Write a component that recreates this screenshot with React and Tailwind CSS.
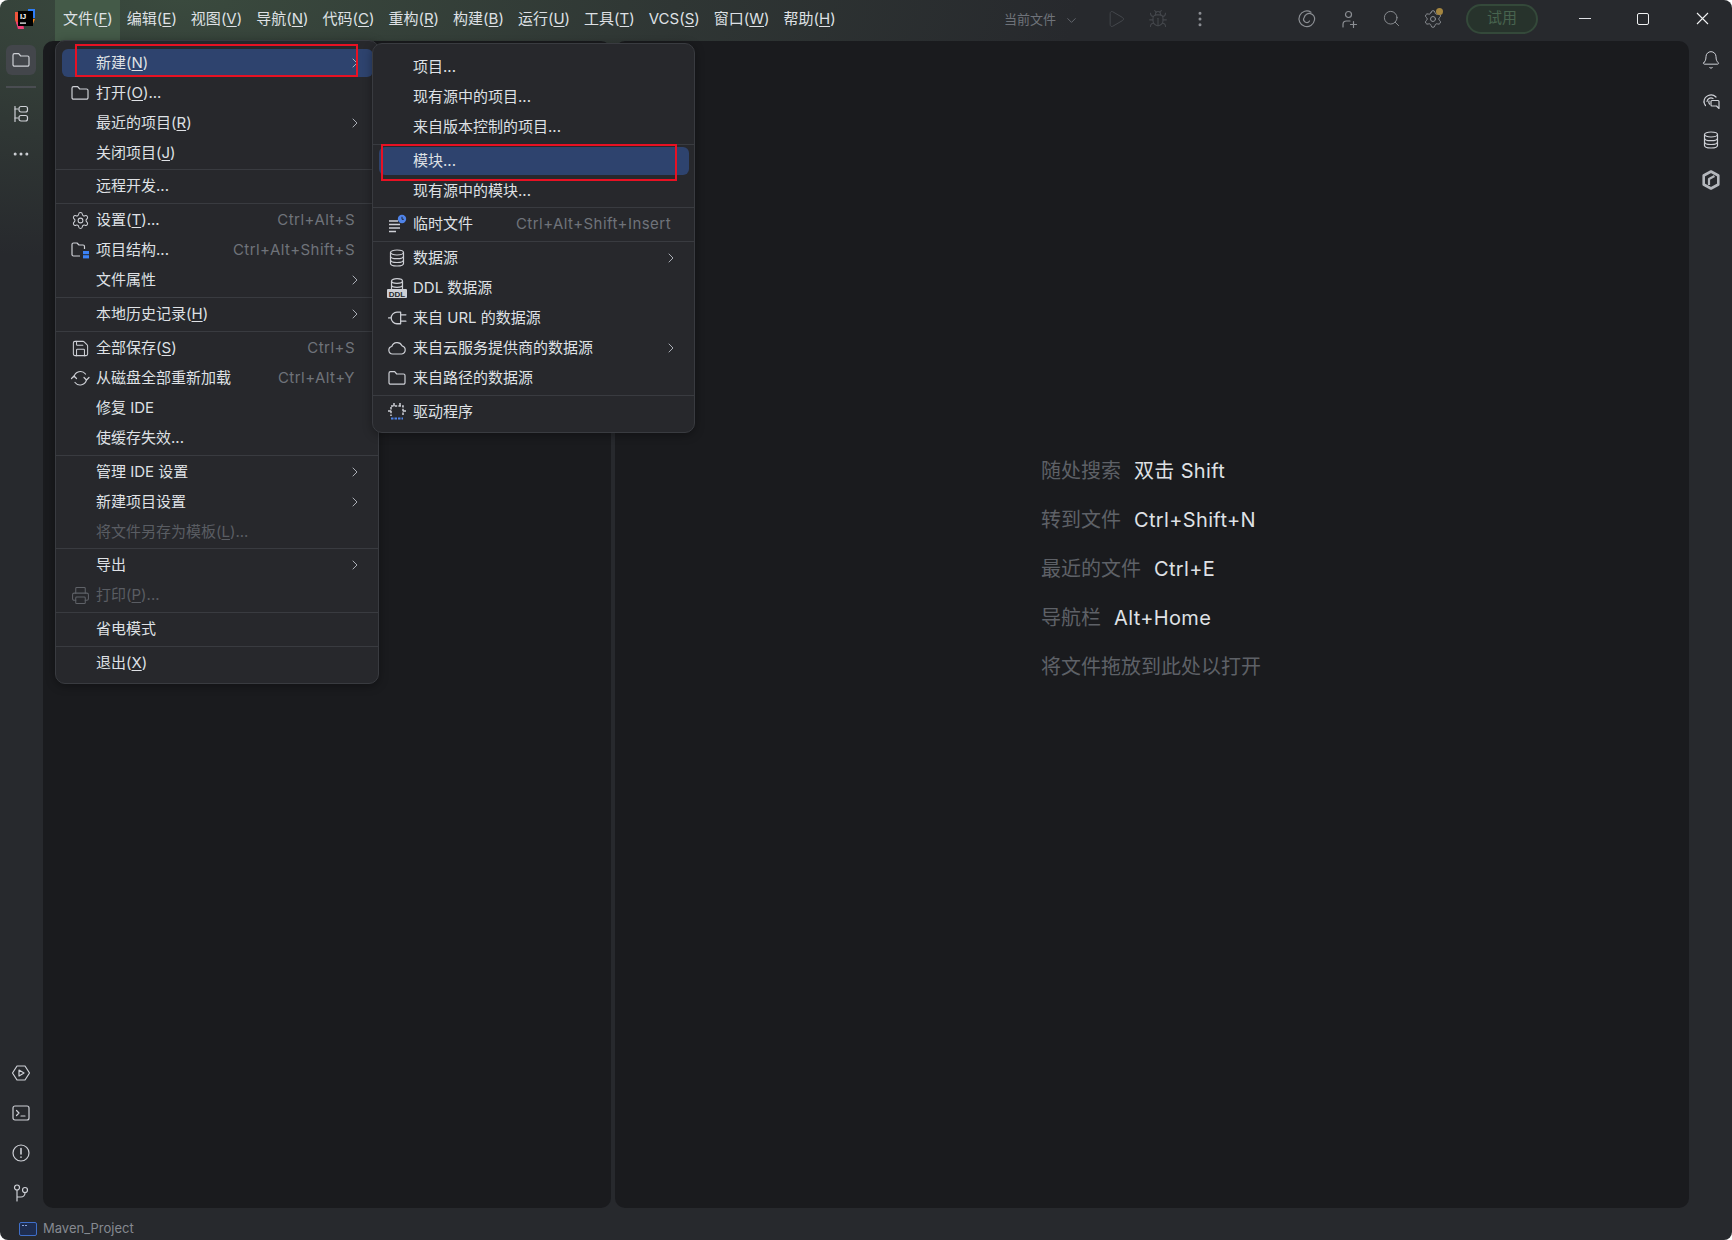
import React from "react";
import { ChevronRight, ChevronDown, Settings, Search, Bug, Play, Bell, Printer, Save, EllipsisVertical, Ellipsis } from "lucide-react";

const FONT = { fontFamily: 'Inter,"Noto Sans CJK SC",sans-serif' };

function Svg({ size = 20, color = "#ced0d6", sw = 1.2, children, view = "0 0 20 20" }) {
  return (
    <svg width={size} height={size} viewBox={view} fill="none" stroke={color} strokeWidth={sw} strokeLinecap="round" strokeLinejoin="round">
      {children}
    </svg>
  );
}

const FolderI = (p) => (
  <Svg {...p}><path d="M2 5.200A1.500 1.500 0 0 1 3.500 3.700h4.200l2 2.300h6.800A1.500 1.500 0 0 1 18 7.500v7.200a1.500 1.500 0 0 1-1.500 1.500h-13A1.500 1.500 0 0 1 2 14.700z" /></Svg>
);
const StructureI = () => (
  <Svg>
    <path d="M4 2.500v15" />
    <path d="M4 5h3M4 14h3" />
    <rect x="8" y="2.500" width="8.500" height="5.500" rx="2" />
    <rect x="8" y="11.500" width="8.500" height="5.500" rx="2" />
  </Svg>
);
const RunHexI = () => (
  <Svg>
    <path d="M6 3h8l4.500 7-4.500 7H6l-4.500-7z" />
    <path d="M8 7l5 3-5 3z" />
  </Svg>
);
const TerminalI = () => (
  <Svg>
    <rect x="2" y="3" width="16" height="14" rx="2" />
    <path d="M5.500 7.500 8 10l-2.500 2.500M10 13h4" />
  </Svg>
);
const AlertI = () => (
  <Svg>
    <circle cx="10" cy="10" r="8" />
    <path d="M10 5.500v5.500M10 14v.300" strokeWidth="1.600" />
  </Svg>
);
const GitI = () => (
  <Svg>
    <circle cx="6" cy="4.500" r="2.500" />
    <circle cx="14" cy="7" r="2.500" />
    <path d="M6 7v11M6 14h4a4 4 0 0 0 4-4v-.500" />
  </Svg>
);
const SpiralI = () => (
  <Svg color="#8c8f94">
    <path d="M14 3.200A7.800 7.800 0 1 0 17.500 11 5.200 5.200 0 0 0 7.200 8.500 3 3 0 0 0 12.500 12" />
  </Svg>
);
const UserI = () => (
  <Svg color="#8c8f94">
    <circle cx="9.500" cy="5.500" r="3" />
    <path d="M4 18v-2.500A3.500 3.500 0 0 1 7.500 12H11M14.500 12.500v6M11.500 15.500h6" />
  </Svg>
);
const AiChatI = () => (
  <Svg>
    <path d="M3 12a7 7 0 0 1 12-5" />
    <path d="M6 11.500a4 4 0 0 1 6-3M4.500 15.500A7 7 0 0 1 3 12M8.500 14a3 3 0 0 1-.500-3" />
    <path d="M11 10.500h6a1 1 0 0 1 1 1v7l-2.500-2.500H11a1 1 0 0 1-1-1v-3.500a1 1 0 0 1 1-1z" />
  </Svg>
);
const DbI = ({ size = 20 }) => (
  <Svg size={size}>
    <ellipse cx="10" cy="4.500" rx="6.500" ry="2.500" />
    <path d="M3.500 4.500v11c0 1.400 2.900 2.500 6.500 2.500s6.500-1.100 6.500-2.500v-11" />
    <path d="M3.500 8.200c0 1.400 2.900 2.500 6.500 2.500s6.500-1.100 6.500-2.500M3.500 12c0 1.400 2.900 2.500 6.500 2.500s6.500-1.100 6.500-2.500" />
  </Svg>
);
const HexI = () => (
  <svg width="20" height="20" viewBox="0 0 20 20" fill="none" stroke="#b4b7bc" strokeLinejoin="round">
    <path d="M10 1.500 17.300 5.500v9L10 18.500 2.700 14.500v-9z" strokeWidth="2.600" />
    <path d="M13.500 6 8 9v6" strokeWidth="2.200" />
  </svg>
);
const StructFolderI = () => (
  <svg width="20" height="20" viewBox="0 0 20 20" fill="none" stroke="#ced0d6" strokeWidth="1.200" strokeLinejoin="round">
    <path d="M10 16H3.500A1.500 1.500 0 0 1 2 14.500v-10A1.500 1.500 0 0 1 3.500 3h3.500l2 2h4A1.500 1.500 0 0 1 14.500 6.500V9" />
    <rect x="13" y="11" width="6" height="3.200" fill="#3b82f6" stroke="none" />
    <rect x="13" y="15.200" width="6" height="3.200" fill="#3b82f6" stroke="none" />
  </svg>
);
const ReloadI = () => (
  <Svg>
    <path d="M4 9a6.500 6.500 0 0 1 11.500-3" />
    <path d="M16.500 11.500A6.500 6.500 0 0 1 5 14.500" />
    <path d="M1.500 10.500 4 8l2.500 2.500" />
    <path d="M14 9.500l2.500 2.500 2.500-2.500" />
  </Svg>
);
const ScratchI = () => (
  <svg width="20" height="20" viewBox="0 0 20 20" fill="none">
    <path d="M2 7h9M2 10.500h11M2 14h11M2 17.500h7" stroke="#ced0d6" strokeWidth="1.300" />
    <circle cx="15" cy="5" r="4.200" fill="#4f83e8" />
    <path d="M15 2.800V5.300h1.800" stroke="#1e2533" strokeWidth="1" />
  </svg>
);
const DdlI = () => (
  <svg width="22" height="22" viewBox="0 0 22 22" fill="none">
    <ellipse cx="11" cy="4" rx="5.500" ry="2.300" stroke="#ced0d6" strokeWidth="1.200" />
    <path d="M5.500 4v8M16.500 4v8M5.500 8c0 1.300 2.500 2.300 5.500 2.300s5.500-1 5.500-2.300" stroke="#ced0d6" strokeWidth="1.200" />
    <rect x="1" y="12" width="20" height="9" rx="1" fill="#ced0d6" />
    <text x="11" y="19.600" textAnchor="middle" fontSize="8" fontWeight="700" fill="#26282c" fontFamily="Liberation Sans">DDL</text>
  </svg>
);
const PlugI = () => (
  <Svg size={21}>
    <path d="M13 4H9.500a5.500 5.500 0 0 0 0 11H13zM13 6.500h5M13 12.500h5M4 9.500H1.500" />
  </Svg>
);
const CloudI = () => (
  <Svg>
    <path d="M5.500 16a3.800 3.800 0 0 1-.700-7.500A5.500 5.500 0 0 1 15 7.800 4.200 4.200 0 0 1 14.800 16z" />
  </Svg>
);
const DriverI = () => (
  <svg width="20" height="20" viewBox="0 0 20 20" fill="none" stroke="#ced0d6" strokeWidth="1.500">
    <path d="M4 4h12v10" strokeDasharray="2.500 1.200" />
    <path d="M4 5v9" strokeDasharray="2.500 1.200" />
    <path d="M1 9h3M16 9h3M7 1v3M13 1v3" />
    <path d="M4 16.500h12" stroke="#4f83e8" strokeWidth="2" strokeDasharray="2.500 1" />
  </svg>
);
const Logo = () => (
  <svg width="22" height="22" viewBox="0 0 22 22">
    <path d="M1 4h7v8H4l-.500 6L1 12z" fill="#f0543c" />
    <path d="M2 14h7l1 7-6 0z" fill="#f23d78" />
    <path d="M14 1h7v9h-7z" fill="#2f7df6" />
    <path d="M15 11h6l-3 7h-5z" fill="#f6851e" />
    <rect x="4" y="3" width="15" height="15" fill="#000" />
    <text x="6" y="10.500" fontSize="7.500" fontWeight="700" fill="#fff" fontFamily="Liberation Sans">IJ</text>
    <rect x="6" y="14.500" width="6" height="1.200" fill="#fff" />
  </svg>
);

const U = ({ children }) => <span className="underline underline-offset-2">{children}</span>;

const titleMenus = [
  ["文件", "F"], ["编辑", "E"], ["视图", "V"], ["导航", "N"], ["代码", "C"], ["重构", "R"],
  ["构建", "B"], ["运行", "U"], ["工具", "T"], ["VCS", "S"], ["窗口", "W"], ["帮助", "H"],
];

const mainMenu = [
  { t: "新建", k: "N", arrow: true, active: true },
  { t: "打开", k: "O", dots: true, icon: <FolderI /> },
  { t: "最近的项目", k: "R", arrow: true },
  { t: "关闭项目", k: "J" },
  { sep: true, thin: true },
  { t: "远程开发..." },
  { sep: true },
  { t: "设置", k: "T", dots: true, sc: "Ctrl+Alt+S", icon: <Settings size={19} strokeWidth={1.3} color="#ced0d6" /> },
  { t: "项目结构...", sc: "Ctrl+Alt+Shift+S", icon: <StructFolderI /> },
  { t: "文件属性", arrow: true },
  { sep: true },
  { t: "本地历史记录", k: "H", arrow: true },
  { sep: true },
  { t: "全部保存", k: "S", sc: "Ctrl+S", icon: <Save size={19} strokeWidth={1.3} color="#ced0d6" /> },
  { t: "从磁盘全部重新加载", sc: "Ctrl+Alt+Y", icon: <ReloadI /> },
  { t: "修复 IDE" },
  { t: "使缓存失效..." },
  { sep: true },
  { t: "管理 IDE 设置", arrow: true },
  { t: "新建项目设置", arrow: true },
  { t: "将文件另存为模板", k: "L", dots: true, off: true },
  { sep: true, thin: true },
  { t: "导出", arrow: true },
  { t: "打印", k: "P", dots: true, off: true, icon: <Printer size={19} strokeWidth={1.3} color="#5f6268" /> },
  { sep: true },
  { t: "省电模式" },
  { sep: true },
  { t: "退出", k: "X" },
];

const subMenu = [
  { t: "项目..." },
  { t: "现有源中的项目..." },
  { t: "来自版本控制的项目..." },
  { sep: true },
  { t: "模块...", active: true },
  { t: "现有源中的模块..." },
  { sep: true, thin: true },
  { t: "临时文件", sc: "Ctrl+Alt+Shift+Insert", icon: <ScratchI /> },
  { sep: true },
  { t: "数据源", arrow: true, icon: <DbI /> },
  { t: "DDL 数据源", icon: <DdlI /> },
  { t: "来自 URL 的数据源", icon: <PlugI /> },
  { t: "来自云服务提供商的数据源", arrow: true, icon: <CloudI /> },
  { t: "来自路径的数据源", icon: <FolderI /> },
  { sep: true },
  { t: "驱动程序", icon: <DriverI /> },
];

function Row({ item }) {
  if (item.sep) {
    return (
      <div className={(item.thin ? "h-[3px]" : "h-[4px]") + " flex items-center"}>
        <div className="h-px w-full bg-[#393b40]" />
      </div>
    );
  }
  return (
    <div className="relative h-[30px] flex items-center pr-[23px] text-[15px]">
      {item.active && <div className="absolute left-[6px] right-[5px] top-[1px] h-[28px] rounded-[6px] bg-[#2e436e]" />}
      <div className="relative w-[40px] pl-[8px] shrink-0 flex items-center justify-center">{item.icon}</div>
      <span className={"relative whitespace-pre " + (item.off ? "text-[#5a5d63]" : "text-[#dfe1e5]")}>
        {item.t}
        {item.k && <>(<U>{item.k}</U>)</>}
        {item.dots && "..."}
      </span>
      {item.sc && <span className="relative ml-auto text-[#6f737a] whitespace-pre tracking-[0.45px]">{item.sc}</span>}
      {item.arrow && (
        <span className="relative ml-auto -mr-[8px]">
          <ChevronRight size={16} strokeWidth={1.4} color="#b4b8bf" />
        </span>
      )}
    </div>
  );
}

const hints = [
  ["随处搜索", "双击 Shift"],
  ["转到文件", "Ctrl+Shift+N"],
  ["最近的文件", "Ctrl+E"],
  ["导航栏", "Alt+Home"],
  ["将文件拖放到此处以打开", ""],
];

const Cell = ({ children, className = "w-[42px]" }) => (
  <div className={"h-full flex items-center justify-center shrink-0 " + className}>{children}</div>
);

export default function App() {
  return (
    <div className="w-[1732px] h-[1240px] bg-white overflow-hidden">
      <div style={FONT} className="relative w-full h-full rounded-[8px] overflow-hidden flex flex-col bg-[#27292d] bg-[radial-gradient(ellipse_900px_260px_at_180px_0px,#3a4a3e_0%,#2f3634_55%,#27292d_100%)]">
        {/* title bar */}
        <div className="h-[41px] shrink-0 flex items-center">
          <div className="w-[55px] h-full flex items-center pl-[14px] pb-[3px]"><Logo /></div>
          <div className="flex h-full items-center">
            {titleMenus.map(([a, k], i) => (
              <div key={i} className={"h-full flex items-center pb-[2px] " + (i === 0 ? "pl-[8px] pr-[7px]" : "px-[7px]") + " text-[15px] text-[#dfe1e5] whitespace-pre " + (i === 0 ? "bg-[#445a48]" : "")}>
                {a}(<U>{k}</U>)
              </div>
            ))}
          </div>
          <div className="ml-auto h-full flex items-center pb-[4px]">
            <span className="text-[13px] pt-[2px] text-[#6f737a] whitespace-pre">当前文件</span>
            <Cell className="w-[16px] ml-[7px] mr-[16px] pt-[4px]"><ChevronDown size={15} strokeWidth={1.3} color="#6f737a" /></Cell>
            <Cell><Play size={20} strokeWidth={1.2} color="#44474c" /></Cell>
            <Cell><Bug size={20} strokeWidth={1.3} color="#44474c" /></Cell>
            <Cell className="w-[42px] mr-[65px]"><EllipsisVertical size={20} strokeWidth={1.6} color="#8c8f94" /></Cell>
            <Cell><SpiralI /></Cell>
            <Cell><UserI /></Cell>
            <Cell><Search size={19} strokeWidth={1.2} color="#8c8f94" /></Cell>
            <Cell className="w-[42px] mr-[12px]">
              <div className="relative">
                <Settings size={20} strokeWidth={1.2} color="#8c8f94" />
                <div className="absolute -top-[1px] right-0 w-[7px] h-[7px] rounded-full bg-[#a4853f]" />
              </div>
            </Cell>
            <div className="w-[72px] h-[30px] mr-[18px] rounded-full border-2 border-[#34493a] bg-[#27332c] flex items-center justify-center text-[15px] text-[#48644f]">试用</div>
            <Cell className="w-[58px]"><div className="w-[12px] h-[1.500px] bg-[#dfe1e5]" /></Cell>
            <Cell className="w-[58px]"><div className="w-[12px] h-[12px] rounded-[2px] border border-[#f0f1f2]" /></Cell>
            <Cell className="w-[60px]">
              <svg width="13" height="13" viewBox="0 0 13 13" stroke="#f0f1f2" strokeWidth="1.100"><path d="M1 1l11 11M12 1 1 12" /></svg>
            </Cell>
          </div>
        </div>

        {/* middle */}
        <div className="flex-1 min-h-0 flex">
          <div className="w-[43px] shrink-0 flex flex-col justify-between items-center pt-[4px] pb-[3px] pr-[1px]">
            <div className="flex flex-col items-center">
              <div className="w-[30px] h-[30px] rounded-[6px] bg-[#43464b] flex items-center justify-center"><FolderI /></div>
              <div className="w-[30px] h-[2px] bg-[#4a4d52] mt-[11px]" />
              <div className="h-[24px] mt-[14px] flex items-center"><StructureI /></div>
              <div className="h-[24px] mt-[16px] flex items-center"><Ellipsis size={20} strokeWidth={1.6} color="#ced0d6" /></div>
            </div>
            <div className="flex flex-col items-center gap-[16px]">
              <div className="h-[24px] flex items-center"><RunHexI /></div>
              <div className="h-[24px] flex items-center"><TerminalI /></div>
              <div className="h-[24px] flex items-center"><AlertI /></div>
              <div className="h-[24px] flex items-center"><GitI /></div>
            </div>
          </div>
          <div className="w-[568px] shrink-0 rounded-[10px] bg-[#1a1b1e]" />
          <div className="w-[4px] shrink-0" />
          <div className="flex-1 rounded-[10px] bg-[#1a1b1e] flex items-center justify-center pb-[112px]">
            <div className="flex flex-col pr-[2px] gap-[23px] text-[20px] leading-[26px]">
              {hints.map(([a, b], i) => (
                <div key={i} className="flex gap-[13px] whitespace-pre">
                  <span className="text-[#5e6167]">{a}</span>
                  {b && <span className="text-[#dfe1e5] tracking-[0.35px]">{b}</span>}
                </div>
              ))}
            </div>
          </div>
          <div className="w-[43px] shrink-0 flex flex-col items-center gap-[16px] pt-[7px]">
            <div className="h-[24px] flex items-center"><Bell size={20} strokeWidth={1.2} color="#ced0d6" /></div>
            <div className="h-[24px] flex items-center"><AiChatI /></div>
            <div className="h-[24px] flex items-center"><DbI /></div>
            <div className="h-[24px] flex items-center"><HexI /></div>
          </div>
        </div>

        {/* status bar */}
        <div className="h-[32px] shrink-0 flex items-center pl-[19px] gap-[6px] pt-[10px]">
          <div className="w-[18px] h-[14px] rounded-[2px] border border-[#3f6fc9] bg-[#1e2d4f] flex gap-[1px] pl-[2px] pt-[2px]">
            <div className="w-[2px] h-px bg-[#8aa5dc]" />
            <div className="w-[2px] h-px bg-[#8aa5dc]" />
          </div>
          <span className="text-[13px] text-[#868a91]">Maven_Project</span>
        </div>

        {/* file menu */}
        <div className="absolute left-[55px] top-[40px] w-[324px] rounded-[10px] bg-[#27282c] border border-[#393b40] pt-[7px] pb-[5px] shadow-[0_2px_10px_rgba(0,0,0,0.35)]">
          {mainMenu.map((item, i) => <Row key={i} item={item} />)}
        </div>
        {/* submenu */}
        <div className="absolute left-[372px] top-[43px] w-[323px] rounded-[10px] bg-[#27282c] border border-[#393b40] pt-[8px] pb-[5px] shadow-[0_2px_10px_rgba(0,0,0,0.35)]">
          {subMenu.map((item, i) => <Row key={i} item={item} />)}
        </div>
        {/* annotation rectangles */}
        <div className="absolute left-[75px] top-[44px] w-[283px] h-[33px] border-2 border-[#e81123]" />
        <div className="absolute left-[381px] top-[144px] w-[296px] h-[37px] border-2 border-[#e81123]" />
      </div>
    </div>
  );
}
